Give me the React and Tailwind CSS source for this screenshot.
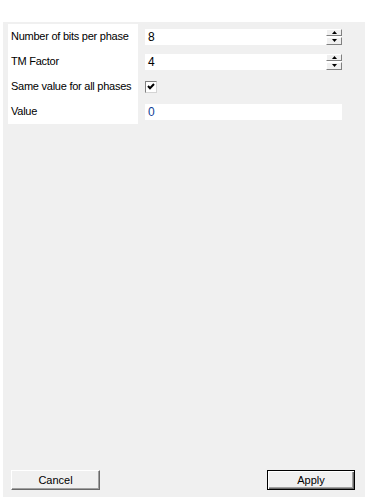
import React from "react";

const font = { fontFamily: '"Liberation Sans", Arial, sans-serif' };

const Spinner = () => (
  <div className="flex flex-col w-[16px] h-[16px] gap-[1px]">
    <div className="flex-1 flex items-center justify-center bg-[#f0f0f0] border border-t-white border-l-white border-r-[#808080] border-b-[#808080]">
      <svg width="5" height="3" viewBox="0 0 5 3"><path d="M2.5 0L5 3H0z" fill="#000" /></svg>
    </div>
    <div className="flex-1 flex items-center justify-center bg-[#f0f0f0] border border-t-white border-l-white border-r-[#808080] border-b-[#808080]">
      <svg width="5" height="3" viewBox="0 0 5 3"><path d="M0 0H5L2.5 3z" fill="#000" /></svg>
    </div>
  </div>
);

const Field = ({ value, spin, color = "text-black" }) => (
  <div className="w-[197px] h-[16px] bg-white flex items-center justify-between">
    <span className={`pl-[3px] text-[12px] leading-none ${color}`}>{value}</span>
    {spin && <Spinner />}
  </div>
);

export default function App() {
  const rows = [
    { label: "Number of bits per phase", el: <Field value="8" spin /> },
    { label: "TM Factor", el: <Field value="4" spin /> },
    {
      label: "Same value for all phases",
      el: (
        <div className="w-[12px] h-[12px] bg-white border border-t-[#808080] border-l-[#808080] border-r-[#d4d4d4] border-b-[#d4d4d4] flex items-center justify-center">
          <svg width="8" height="7" viewBox="0 0 8 7">
            <path d="M1 3l2 2.2 4-4.2" stroke="#000" strokeWidth="2" fill="none" />
          </svg>
        </div>
      ),
    },
    { label: "Value", el: <Field value="0" color="text-[#123f96]" /> },
  ];

  return (
    <div className="w-[368px] h-[501px] bg-white pt-[22px] pl-[3px] pr-[3px] pb-[4px]" style={font}>
      <div className="h-full bg-[#f0f0f0] flex flex-col pl-[5px] pt-[2px] pr-[23px] pb-[7px]">
        <div className="flex gap-[7px]">
          <div className="w-[130px] bg-white flex flex-col">
            {rows.map((r) => (
              <div key={r.label} className="h-[25px] flex items-center pl-[3px] text-[11px] tracking-[-0.25px] text-black">
                {r.label}
              </div>
            ))}
          </div>
          <div className="flex flex-col">
            {rows.map((r) => (
              <div key={r.label} className="h-[25px] flex items-center">
                {r.el}
              </div>
            ))}
          </div>
        </div>
        <div className="flex-1" />
        <div className="flex justify-between items-end pl-[3px]">
          <button className="w-[89px] h-[20px] text-[11px] text-black bg-[#f0f0f0] border border-t-white border-l-white border-r-[#696969] border-b-[#696969] shadow-[inset_-1px_-1px_0_#a0a0a0]">
            Cancel
          </button>
          <button className="w-[88px] h-[20px] mr-[-13px] text-[11px] text-black bg-[#f0f0f0] border border-black shadow-[inset_1px_1px_0_#fff,inset_-1px_-1px_0_#696969,inset_-2px_-2px_0_#a0a0a0]">
            Apply
          </button>
        </div>
      </div>
    </div>
  );
}
